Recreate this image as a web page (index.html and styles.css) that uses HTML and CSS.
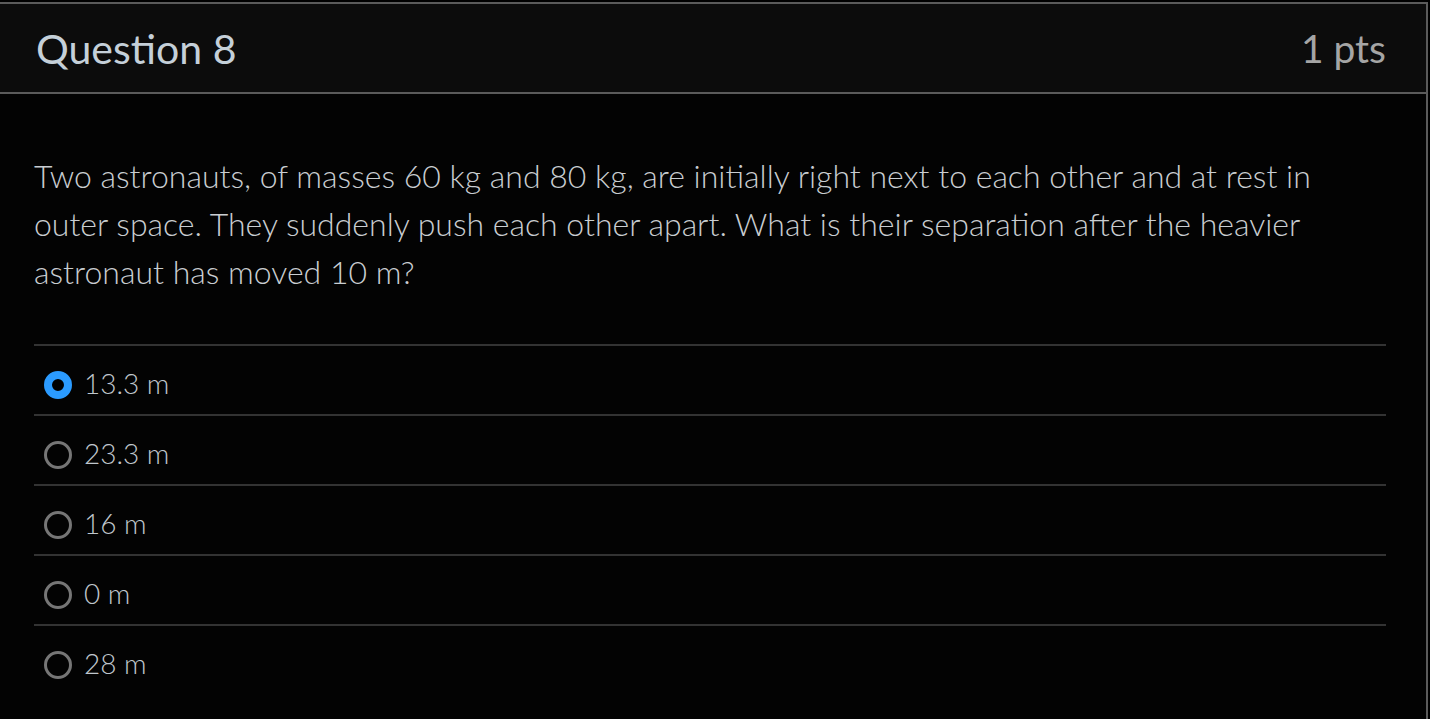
FILE: index.html
```html
<!DOCTYPE html>
<html lang="en">
<head>
<meta charset="utf-8">
<title>Question 8</title>
<link rel="stylesheet" href="styles.css">
</head>
<body>
<div class="question">
  <div class="q-header">
    <h2 class="q-title">Question 8</h2>
    <span class="q-points">1 pts</span>
  </div>
  <div class="q-body">
    <p class="q-text">Two astronauts, of masses 60 kg and 80 kg, are initially right next to each other and at rest in outer space. They suddenly push each other apart. What is their separation after the heavier astronaut has moved 10 m?</p>
    <div class="answers">
      <label class="answer"><span class="radio selected"></span><span class="answer-text">13.3 m</span></label>
      <label class="answer"><span class="radio"></span><span class="answer-text">23.3 m</span></label>
      <label class="answer"><span class="radio"></span><span class="answer-text">16 m</span></label>
      <label class="answer"><span class="radio"></span><span class="answer-text">0 m</span></label>
      <label class="answer"><span class="radio"></span><span class="answer-text">28 m</span></label>
    </div>
  </div>
</div>
</body>
</html>
```
FILE: styles.css
```css
html, body {
  margin: 0;
  padding: 0;
  background: #000;
  overflow: hidden;
}
body {
  font-family: Lato, "Noto Sans", sans-serif;
}
.question {
  box-sizing: border-box;
  width: 1430px;
  margin: 2px 0 0 -2px;
  border: 2px solid #5b5b5b;
  border-bottom: none;
  background: #030303;
  min-height: 740px;
}
.q-header {
  height: 88px;
  background: #0c0c0c;
  border-bottom: 2px solid #5b5b5b;
  display: flex;
  justify-content: space-between;
  align-items: center;
  padding: 0 40px 0 36px;
}
.q-title {
  margin: 0;
  font-weight: 400;
  font-size: 41px;
  color: #c5d0d9;
}
.q-points {
  font-size: 39px;
  color: #a5a5a5;
}
.q-body {
  padding: 58px 40px 0 34px;
}
.q-text {
  margin: 0 0 48px 0;
  font-weight: 300;
  font-size: 32px;
  line-height: 48px;
  color: #c9cdd1;
}
.answers {
  display: flex;
  flex-direction: column;
}
.answer {
  box-sizing: border-box;
  height: 70px;
  border-top: 2px solid #333;
  display: flex;
  align-items: center;
  padding: 10px 0 0 10px;
  gap: 12px;
}
.radio {
  box-sizing: border-box;
  width: 28px;
  height: 28px;
  border-radius: 50%;
  border: 3px solid #767676;
  flex: none;
}
.radio.selected {
  border: 8px solid #2b9bff;
  background: #000;
}
.answer-text {
  font-weight: 300;
  font-size: 28px;
  color: #c0c7cd;
  margin-top: -5px;
}
```
